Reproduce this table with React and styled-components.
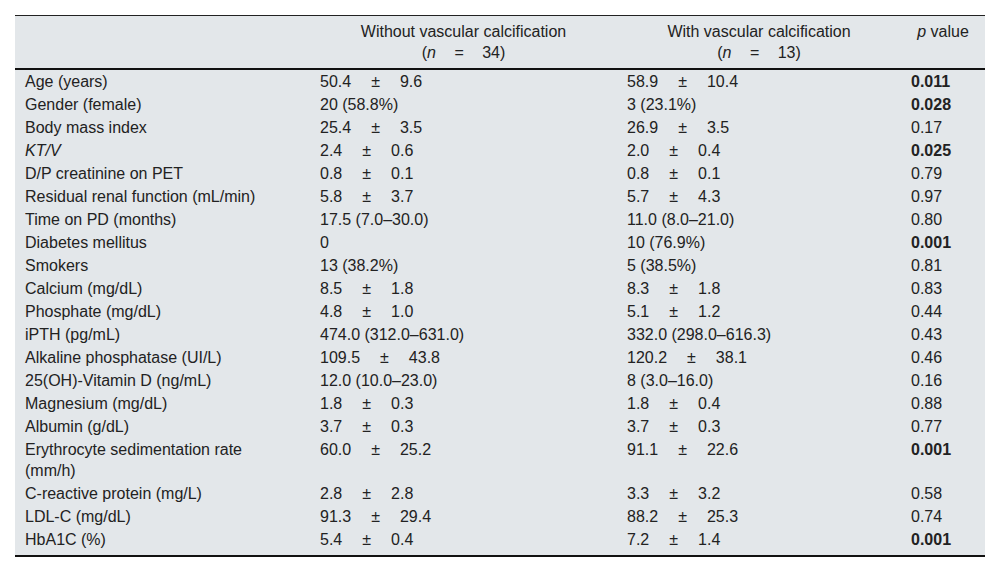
import styled, { createGlobalStyle } from 'styled-components';

const GlobalStyle = createGlobalStyle`
  body {
    margin: 0;
    background: #fff;
    color: #222;
    font-family: "Liberation Sans", Arial, sans-serif;
  }
`;

const Page = styled.div`
  padding: 15px;
`;

const Table = styled.table`
  width: 970px;
  table-layout: fixed;
  border-collapse: collapse;
  background: #e3e7ea;
  border-top: 1px solid #222;
  border-bottom: 2px solid #111;
  font-size: 16px;
  line-height: 21px;
`;

const Head = styled.th`
  padding: 5px 10px;
  font-weight: normal;
  text-align: center;
  vertical-align: top;
  border-bottom: 2px solid #111;
`;

const Row = styled.tr`
  &:last-child td {
    padding-bottom: 5px;
  }
`;

const Cell = styled.td`
  padding: 1px 10px;
  vertical-align: top;
  text-align: left;
  white-space: ${(props) => (props.$label ? 'normal' : 'nowrap')};
  padding-right: ${(props) => (props.$label ? '26px' : '10px')};
  font-weight: ${(props) => (props.$bold ? 'bold' : 'normal')};
  font-style: ${(props) => (props.$italic ? 'italic' : 'normal')};
`;

const Sym = styled.span`
  margin: 0 ${(props) => (props.$wide ? '20px' : '18.5px')};
`;

const rows = [
  { label: 'Age (years)', a: ['50.4', '9.6'], b: ['58.9', '10.4'], p: '0.011', sig: true },
  { label: 'Gender (female)', a: '20 (58.8%)', b: '3 (23.1%)', p: '0.028', sig: true },
  { label: 'Body mass index', a: ['25.4', '3.5'], b: ['26.9', '3.5'], p: '0.17' },
  { label: 'KT/V', italic: true, a: ['2.4', '0.6'], b: ['2.0', '0.4'], p: '0.025', sig: true },
  { label: 'D/P creatinine on PET', a: ['0.8', '0.1'], b: ['0.8', '0.1'], p: '0.79' },
  { label: 'Residual renal function (mL/min)', a: ['5.8', '3.7'], b: ['5.7', '4.3'], p: '0.97' },
  { label: 'Time on PD (months)', a: '17.5 (7.0–30.0)', b: '11.0 (8.0–21.0)', p: '0.80' },
  { label: 'Diabetes mellitus', a: '0', b: '10 (76.9%)', p: '0.001', sig: true },
  { label: 'Smokers', a: '13 (38.2%)', b: '5 (38.5%)', p: '0.81' },
  { label: 'Calcium (mg/dL)', a: ['8.5', '1.8'], b: ['8.3', '1.8'], p: '0.83' },
  { label: 'Phosphate (mg/dL)', a: ['4.8', '1.0'], b: ['5.1', '1.2'], p: '0.44' },
  { label: 'iPTH (pg/mL)', a: '474.0 (312.0–631.0)', b: '332.0 (298.0–616.3)', p: '0.43' },
  { label: 'Alkaline phosphatase (UI/L)', a: ['109.5', '43.8'], b: ['120.2', '38.1'], p: '0.46' },
  { label: '25(OH)-Vitamin D (ng/mL)', a: '12.0 (10.0–23.0)', b: '8 (3.0–16.0)', p: '0.16' },
  { label: 'Magnesium (mg/dL)', a: ['1.8', '0.3'], b: ['1.8', '0.4'], p: '0.88' },
  { label: 'Albumin (g/dL)', a: ['3.7', '0.3'], b: ['3.7', '0.3'], p: '0.77' },
  { label: 'Erythrocyte sedimentation rate (mm/h)', a: ['60.0', '25.2'], b: ['91.1', '22.6'], p: '0.001', sig: true },
  { label: 'C-reactive protein (mg/L)', a: ['2.8', '2.8'], b: ['3.3', '3.2'], p: '0.58' },
  { label: 'LDL-C (mg/dL)', a: ['91.3', '29.4'], b: ['88.2', '25.3'], p: '0.74' },
  { label: 'HbA1C (%)', a: ['5.4', '0.4'], b: ['7.2', '1.4'], p: '0.001', sig: true },
];

function Value({ v }) {
  if (Array.isArray(v)) {
    return (
      <>
        {v[0]}
        <Sym $wide>±</Sym>
        {v[1]}
      </>
    );
  }
  return v;
}

function App() {
  return (
    <Page>
      <GlobalStyle />
      <Table>
        <colgroup>
          <col style={{ width: 295 }} />
          <col style={{ width: 307 }} />
          <col style={{ width: 284 }} />
          <col style={{ width: 84 }} />
        </colgroup>
        <thead>
          <tr>
            <Head />
            <Head>
              Without vascular calcification
              <br />(<i>n</i>
              <Sym>=</Sym>34)
            </Head>
            <Head>
              With vascular calcification
              <br />(<i>n</i>
              <Sym>=</Sym>13)
            </Head>
            <Head>
              <i>p</i> value
            </Head>
          </tr>
        </thead>
        <tbody>
          {rows.map((r) => (
            <Row key={r.label}>
              <Cell $label $italic={r.italic}>
                {r.label}
              </Cell>
              <Cell>
                <Value v={r.a} />
              </Cell>
              <Cell>
                <Value v={r.b} />
              </Cell>
              <Cell $bold={r.sig}>{r.p}</Cell>
            </Row>
          ))}
        </tbody>
      </Table>
    </Page>
  );
}

export default App;
